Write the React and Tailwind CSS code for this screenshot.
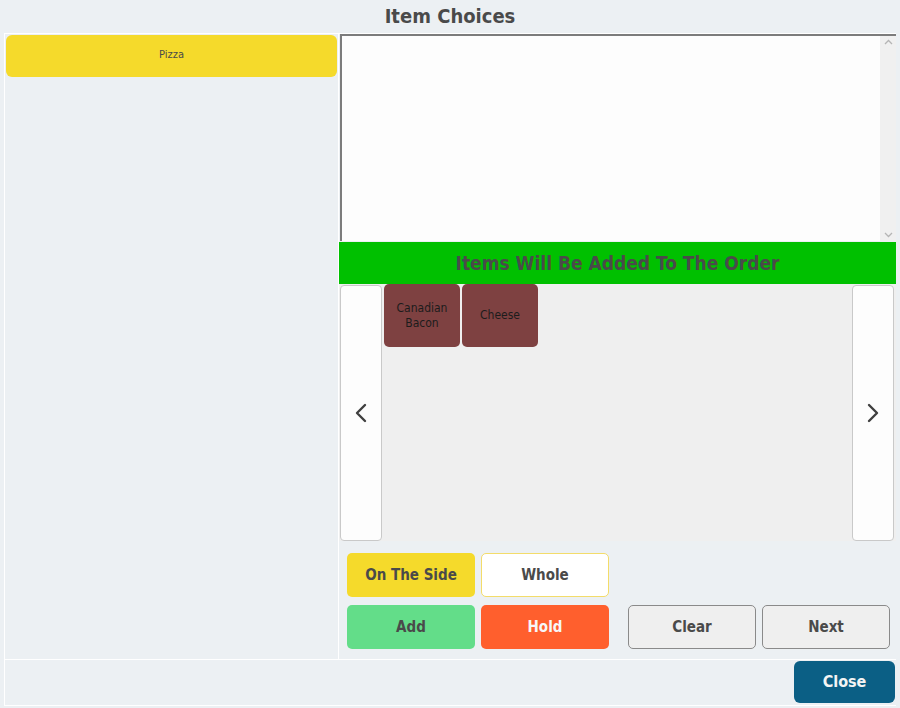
import React from "react";

const font = { fontFamily: '"DejaVu Sans Condensed", "DejaVu Sans", Verdana, sans-serif' };

function Chevron({ dir }) {
  const d = dir === "left" ? "M14 4 L6 12 L14 20" : "M6 4 L14 12 L6 20";
  return (
    <svg width="20" height="24" viewBox="0 0 20 24" fill="none">
      <path d={d} stroke="#3f3f3f" strokeWidth="2.4" strokeLinecap="round" strokeLinejoin="round" />
    </svg>
  );
}

function ItemTile({ children }) {
  return (
    <div className="w-[76px] h-[63px] rounded-[5px] bg-[#7e4141] flex items-center justify-center text-center text-[12px] leading-[15px] text-[#1c1c1c]">
      {children}
    </div>
  );
}

function ActionButton({ className, children }) {
  return (
    <div className={`w-[128px] h-[44px] rounded-[5px] flex items-center justify-center text-[15px] font-bold ${className}`}>
      {children}
    </div>
  );
}

export default function App() {
  return (
    <div className="w-[900px] h-[708px] bg-[#ecf0f3] flex flex-col overflow-hidden" style={font}>
      <div className="h-[33px] pb-[2px] flex items-center justify-center text-[20px] font-bold text-[#4a4a4a]">
        Item Choices
      </div>

      <div className="mx-[4px] flex-1 flex flex-col border border-white border-r-0">
        <div className="flex-1 flex border-b border-white">
          {/* category list */}
          <div className="w-[334px] p-[1px] border-r border-white">
            <div className="h-[42px] pb-[2px] rounded-[6px] bg-[#f5da2b] flex items-center justify-center text-[11px] text-[#4a4a4a]">
              Pizza
            </div>
          </div>

          {/* selection panel */}
          <div className="flex-1 flex flex-col">
            <div className="h-[207px] ml-[1px] flex bg-[#fdfdfd] border-t-2 border-l-2 border-[#7c7c7c]">
              <div className="flex-1" />
              <div className="w-[16px] bg-[#f0f0f0] flex flex-col items-center justify-between py-[3px]">
                <svg width="9" height="6" viewBox="0 0 9 6"><path d="M1 5 L4.5 1.5 L8 5" stroke="#b5b5b5" strokeWidth="1.3" fill="none" /></svg>
                <svg width="9" height="6" viewBox="0 0 9 6"><path d="M1 1 L4.5 4.5 L8 1" stroke="#b5b5b5" strokeWidth="1.3" fill="none" /></svg>
              </div>
            </div>

            <div className="mt-[1px] h-[42px] bg-[#00c000] flex items-center justify-center text-[19px] font-bold text-[#4a4a4a]">
              Items Will Be Added To The Order
            </div>

            <div className="h-[257px] bg-[#efefef] flex">
              <div className="w-[42px] mt-[1px] ml-[1px] rounded-[4px] bg-[#fdfdfd] border border-[#c9c9c9] flex items-center justify-center">
                <Chevron dir="left" />
              </div>
              <div className="flex-1 flex items-start gap-[2px] pl-[2px]">
                <ItemTile>
                  Canadian
                  <br />
                  Bacon
                </ItemTile>
                <ItemTile>Cheese</ItemTile>
              </div>
              <div className="w-[42px] mt-[1px] mr-[2px] rounded-[4px] bg-[#fdfdfd] border border-[#c9c9c9] flex items-center justify-center">
                <Chevron dir="right" />
              </div>
            </div>

            <div className="flex-1 pt-[12px] pl-[8px] flex flex-col gap-[8px]">
              <div className="flex gap-[6px]">
                <ActionButton className="bg-[#f5da2b] text-[#4a4a4a]">On The Side</ActionButton>
                <ActionButton className="bg-white border border-[#f3dc6a] text-[#4a4a4a]">Whole</ActionButton>
              </div>
              <div className="flex gap-[6px]">
                <ActionButton className="bg-[#63dd89] text-[#4a4a4a]">Add</ActionButton>
                <ActionButton className="bg-[#ff5f2d] text-[#f7f7f7]">Hold</ActionButton>
                <ActionButton className="ml-[13px] bg-[#efefef] border border-[#8a8a8a] text-[#4a4a4a]">Clear</ActionButton>
                <ActionButton className="bg-[#efefef] border border-[#8a8a8a] text-[#4a4a4a]">Next</ActionButton>
              </div>
            </div>
          </div>
        </div>

        <div className="h-[45px] flex items-start justify-end pt-[1px] pr-[1px]">
          <div className="w-[101px] h-[42px] rounded-[6px] bg-[#0b5f85] flex items-center justify-center text-[16px] font-bold text-[#f4f4f4]">
            Close
          </div>
        </div>
      </div>
      <div className="h-[2px]" />
    </div>
  );
}
